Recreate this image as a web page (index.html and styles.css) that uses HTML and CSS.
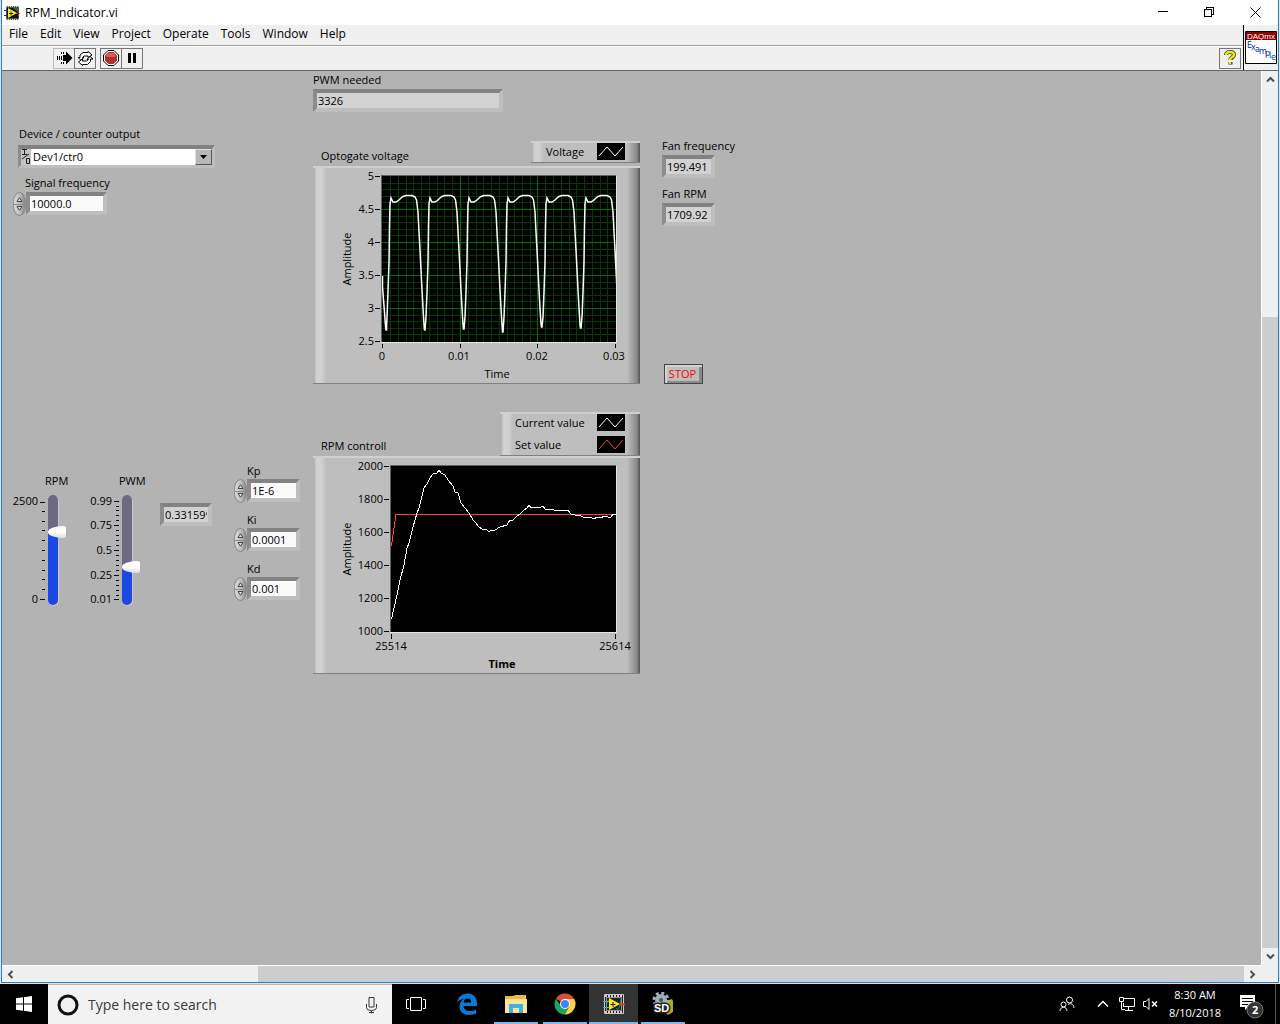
FILE: index.html
```html
<!DOCTYPE html>
<html lang="en">
<head>
<meta charset="utf-8">
<title>RPM_Indicator.vi</title>
<link rel="stylesheet" href="styles.css">
</head>
<body>
<svg class="sprites" aria-hidden="true">
  <defs>
    <symbol id="vi" viewBox="0 0 16 14">
      <path fill="#555" d="M2 0h13v14H2z"/>
      <path fill="#111" d="M3 2h11v10H3z"/>
      <path stroke="#ddd" stroke-dasharray="1 1" d="M2 .5h13M2 13.500h13"/>
      <path stroke="#1d1dc8" d="M0 4.500h5M0 9.500h5"/>
      <path stroke="#e02020" d="M12 7.500h4"/>
      <path fill="#1c7a1c" d="M9 2h5v4z"/>
      <path fill="#ffe81a" d="M4 2l9 5-9 5z"/>
      <path stroke="#222" d="M5 7.500h4M7 5.500v4"/>
    </symbol>
    <symbol id="up" viewBox="0 0 7 5"><path d="M1 4.500L3.500.800 6 4.500z" fill="#ddd" stroke="#444" stroke-width="1"/></symbol>
    <symbol id="down" viewBox="0 0 7 5"><path d="M1 .5L3.500 4.200 6 .5z" fill="#ddd" stroke="#444" stroke-width="1"/></symbol>
    <path id="cycle" d="M1 141L2 116 3 86 3.500 50 4 28 5 22 7 26h3l3-2 2-2 2-1.500L20 19.500h6L29 21l1.500 3L32 36l1 20 1 18 1 20 1 20 1 18"/>
    <clipPath id="plotClip"><path d="M0 0h234v166H0z"/></clipPath>
  </defs>
</svg>

<div class="window">
  <header class="titlebar">
    <svg class="app-icon" width="16" height="14"><use href="#vi"/></svg>
    <h1>RPM_Indicator.vi</h1>
    <button class="caption" aria-label="Minimize"><svg width="11" height="11"><path d="M0 4.500h10"/></svg></button>
    <button class="caption" aria-label="Restore"><svg width="11" height="11"><path d="M.5 2.500h7v7h-7zM2.500 2.500v-2h7v7h-2"/></svg></button>
    <button class="caption" aria-label="Close"><svg width="11" height="11"><path class="smooth" d="M.5.500l10 10M10.500.500l-10 10"/></svg></button>
  </header>

  <div class="bars">
    <div class="bars-main">
      <nav class="menu">
        <button>File</button><button>Edit</button><button>View</button><button>Project</button><button>Operate</button><button>Tools</button><button>Window</button><button>Help</button>
      </nav>
      <div class="toolbar">
        <button class="tool pale" aria-label="Running"><svg width="17" height="14"><path class="crisp" d="M1.500 5v4M3.500 5v4M5.500 5v4M5.500 1v2M7.500 1v2M5.500 11v2M7.500 11v2" stroke="#000" fill="none"/><path d="M7 4h3V.5l6.500 6.500-6.500 6.500V10H7z"/></svg></button>
        <button class="tool" aria-label="Run continuously"><svg width="17" height="15" fill="#fff" stroke="#000"><path d="M3 6.500V4L6 1.500h5V.500L15 4l-4 2.500V5H7L5.500 6.500H7L3.800 9 1 6.500z"/><path d="M13.500 8v2.500l-3 3h-5v1L1.500 11l4-3v2h4L11.500 8.500H10L13 5.500l3 2.500z"/></svg></button>
        <button class="tool stop-run" aria-label="Abort execution"><svg width="16" height="16"><path d="M5 .5h6L15.500 5v6L11 15.500H5L.5 11V5z" fill="#fff" stroke="#000"/><path d="M5.500 2h5L14 5.500v5L10.500 14h-5L2 10.500v-5z" fill="#b82c2c"/><path d="M5.500 3h5L13 5.500 12 7H4L3 5.500z" fill="#d46060"/></svg></button>
        <button class="tool" aria-label="Pause"><svg width="10" height="10"><path d="M1 0h3v10H1zM6 0h3v10H6z"/></svg></button>
        <button class="tool help" aria-label="Context help"><svg width="14" height="16"><path d="M3 5c0-4 8-4 8-.5 0 3-3.500 2.500-3.500 5.500M7.500 12v2.500" fill="none" stroke="#333" stroke-width="4"/><path d="M3 5c0-4 8-4 8-.5 0 3-4 2.500-4 5.500M7 12v2" fill="none" stroke="#f6ea00" stroke-width="2.500"/></svg></button>
      </div>
    </div>
    <div class="vi-icon">
      <svg width="32" height="33" role="img" aria-label="DAQmx Example">
        <path d="M.5.500h31v32H.5z" fill="#fff" stroke="#000"/><path d="M1 1h30v8H1z" fill="#900000"/>
        <text class="daq" x="2" y="8">DAQmx</text>
        <text class="example" x="2 6 10 14 20 24 26" y="17 19 21 23 25 27 29">Example</text>
      </svg>
    </div>
  </div>

  <div class="workspace">
    <main class="panel">
      <section class="col-inputs">
        <div class="device">
          <label for="device">Device / counter output</label>
          <div class="device-box">
            <svg width="10" height="16" aria-hidden="true"><path d="M1 .5h5M3.500.500v5M1 5.500h5M1 10l7-5M5.500 9.500h3v5h-3z" fill="none" stroke="#222"/></svg>
            <select id="device"><option>Dev1/ctr0</option></select>
            <span class="drop"><svg width="7" height="4"><path d="M0 0h7L3.500 4z"/></svg></span>
          </div>
        </div>
        <div class="numeric freq">
          <label for="freq">Signal frequency</label>
          <div class="spinbox">
            <span class="spin"><button aria-label="Increase"><svg width="7" height="5"><use href="#up"/></svg></button><button aria-label="Decrease"><svg width="7" height="5"><use href="#down"/></svg></button></span>
            <input id="freq" class="field" value="10000.0">
          </div>
        </div>

        <div class="tuning">
          <div class="slider">
            <label for="rpm">RPM</label>
            <div class="slider-row">
              <svg class="scale" width="34" height="110"><text x="26" y="10">2500</text><text x="26" y="108">0</text>
                <path d="M28 7.500h5M30 16.500h3M30 26.500h3M30 35.500h3M30 45.500h3M30 55.500h3M30 65.500h3M30 75.500h3M30 84.500h3M30 94.500h3M28 104.500h5"/></svg>
              <input id="rpm" type="range" min="0" max="2500" value="1710" style="--fill:68%">
            </div>
          </div>
          <div class="slider">
            <label for="pwm">PWM</label>
            <div class="slider-row">
              <svg class="scale" width="34" height="110"><text x="26" y="10">0.99</text><text x="26" y="34">0.75</text><text x="26" y="59">0.5</text><text x="26" y="84">0.25</text><text x="26" y="108">0.01</text>
                <path d="M28 6.500h5M28 30.500h5M28 55.500h5M28 80.500h5M28 104.500h5M30 11.500h3M30 15.500h3M30 20.500h3M30 25.500h3M30 35.500h3M30 40.500h3M30 45.500h3M30 50.500h3M30 60.500h3M30 65.500h3M30 70.500h3M30 75.500h3M30 85.500h3M30 90.500h3M30 95.500h3M30 100.500h3"/></svg>
              <input id="pwm" type="range" min="0.01" max="0.99" step="0.001" value="0.332" style="--fill:34%">
            </div>
          </div>
          <input class="field readout duty" aria-label="PWM value" value="0.331599" readonly>
          <div class="gains">
            <div class="numeric">
              <label for="kp">Kp</label>
              <div class="spinbox"><span class="spin"><button aria-label="Increase Kp"><svg width="7" height="5"><use href="#up"/></svg></button><button aria-label="Decrease Kp"><svg width="7" height="5"><use href="#down"/></svg></button></span><input id="kp" class="field" value="1E-6"></div>
            </div>
            <div class="numeric">
              <label for="ki">Ki</label>
              <div class="spinbox"><span class="spin"><button aria-label="Increase Ki"><svg width="7" height="5"><use href="#up"/></svg></button><button aria-label="Decrease Ki"><svg width="7" height="5"><use href="#down"/></svg></button></span><input id="ki" class="field" value="0.0001"></div>
            </div>
            <div class="numeric">
              <label for="kd">Kd</label>
              <div class="spinbox"><span class="spin"><button aria-label="Increase Kd"><svg width="7" height="5"><use href="#up"/></svg></button><button aria-label="Decrease Kd"><svg width="7" height="5"><use href="#down"/></svg></button></span><input id="kd" class="field" value="0.001"></div>
            </div>
          </div>
        </div>
      </section>

      <section class="col-charts">
        <div class="needed">
          <label for="needed">PWM needed</label>
          <input id="needed" class="field readout" value="3326" readonly>
        </div>

        <figure class="graph">
          <div class="graph-head">
            <figcaption>Optogate voltage</figcaption>
            <ul class="legend raised one">
              <li>Voltage <svg width="28" height="17"><path class="swatch" d="M2 13L10 4l8 9 8-9"/></svg></li>
            </ul>
          </div>
          <div class="raised plot">
            <svg width="327" height="215">
              <g class="ylab"><text x="61" y="12">5</text><text x="61" y="45">4.5</text><text x="61" y="78">4</text><text x="61" y="111">3.5</text><text x="61" y="144">3</text><text x="61" y="177">2.5</text></g>
              <path class="ticks" d="M62 8.500h5M62 41.500h5M62 74.500h5M62 107.500h5M62 140.500h5M62 173.500h5M69.500 176v4M147.500 176v4M224.500 176v4M302.500 176v4"/>
              <g class="xlab"><text x="69" y="192">0</text><text x="146" y="192">0.01</text><text x="224" y="192">0.02</text><text x="301" y="192">0.03</text><text x="184" y="210">Time</text></g>
              <text class="axis" transform="translate(38 91) rotate(-90)">Amplitude</text>
              <path class="bezel-dark" d="M68.500 174V7.500H303"/><path class="bezel-light" d="M68 174.500h235.500V8"/>
              <g transform="translate(69 8)">
                <path d="M0 0h234v166H0z"/>
                <path class="minor" d="M8.500 0v166M16.500 0v166M24.500 0v166M31.500 0v166M39.500 0v166M47.500 0v166M55.500 0v166M62.500 0v166M70.500 0v166M86.500 0v166M94.500 0v166M101.500 0v166M109.500 0v166M117.500 0v166M125.500 0v166M132.500 0v166M140.500 0v166M148.500 0v166M163.500 0v166M171.500 0v166M179.500 0v166M187.500 0v166M194.500 0v166M202.500 0v166M210.500 0v166M218.500 0v166M225.500 0v166M0 7.500h234M0 13.500h234M0 20.500h234M0 26.500h234M0 40.500h234M0 46.500h234M0 53.500h234M0 59.500h234M0 73.500h234M0 79.500h234M0 86.500h234M0 92.500h234M0 106.500h234M0 112.500h234M0 119.500h234M0 125.500h234M0 139.500h234M0 145.500h234M0 152.500h234M0 158.500h234"/>
                <path class="major" d="M78.500 0v166M155.500 0v166M0 33.500h234M0 66.500h234M0 99.500h234M0 132.500h234"/>
                <g class="trace bold" clip-path="url(#plotClip)">
                  <path d="M.5 100v11L2 130l1.500 20 .5 4h.5L5 141M41 132l1 17 .5 5h.5l1-13M80 132l1 17 .5 4h.5l1-12M119 132l1 17 .5 7h.5l1-15M158 132l1 16 .5 3h.5l1-10M197 132l1 17 .5 3h.5l1-11"/>
                  <use href="#cycle" x="4"/><use href="#cycle" x="43"/><use href="#cycle" x="82"/><use href="#cycle" x="121"/><use href="#cycle" x="160"/><use href="#cycle" x="199"/>
                </g>
              </g>
            </svg>
          </div>
        </figure>

        <figure class="graph second">
          <div class="graph-head">
            <figcaption>RPM controll</figcaption>
            <ul class="legend raised two">
              <li>Current value <svg width="28" height="17"><path class="swatch" d="M2 13L10 4l8 9 8-9"/></svg></li>
              <li>Set value <svg width="28" height="17"><path class="swatch red" d="M2 13L10 4l8 9 8-9"/></svg></li>
            </ul>
          </div>
          <div class="raised plot">
            <svg width="327" height="215">
              <g class="ylab"><text x="70" y="12">2000</text><text x="70" y="45">1800</text><text x="70" y="78">1600</text><text x="70" y="111">1400</text><text x="70" y="144">1200</text><text x="70" y="177">1000</text></g>
              <path class="ticks" d="M71 8.500h5M71 41.500h5M71 74.500h5M71 107.500h5M71 140.500h5M71 173.500h5M78.500 176v5M302.500 176v5"/>
              <g class="xlab"><text x="78" y="192">25514</text><text x="302" y="192">25614</text><text class="strong" x="189" y="210">Time</text></g>
              <text class="axis" transform="translate(38 91) rotate(-90)">Amplitude</text>
              <path class="bezel-dark" d="M77.500 174V7.500H303"/><path class="bezel-light" d="M77 174.500h226.500V8"/>
              <g transform="translate(78 8)">
                <path d="M0 0h225v166H0z"/>
                <path class="trace red" d="M.5 80L5 48.500h220"/>
                <path class="trace" d="M.5 153L6 129 9 114 13 99 16 82 18 77 22 61 26 47 28 42 30 34 33 22 36 18 39 12 42 8 46 7 48 4 50 7 54 9 57 14 62 20 64 26 67 27 70 37 74 42 78 47 82 54 85 57 88 61 91 63 95 63 98 66 100 64 104 64 109 61 116 59 119 54 122 54 126 50 129 48 133 44 136 42 138 39 140 42 144 41 148 42 152 40 154 43 160 43 166 45 172 44 175 45 177 44 180 48 183 48 185 50 188 49 192 51 199 51 203 53 206 51 210 52 213 50 216 50 218 52 220 51 222 48 225 48"/>
              </g>
            </svg>
          </div>
        </figure>
      </section>

      <section class="col-readouts">
        <div class="reading"><label for="fanf">Fan frequency</label><input id="fanf" class="field readout" value="199.491" readonly></div>
        <div class="reading"><label for="fanr">Fan RPM</label><input id="fanr" class="field readout" value="1709.92" readonly></div>
        <button class="stop">STOP</button>
      </section>
    </main>

    <div class="vscroll">
      <button aria-label="Scroll up"><svg width="9" height="7"><path d="M1 5.500L4.500 2 8 5.500"/></svg></button>
      <div class="v-track"><div class="v-thumb"></div></div>
      <button aria-label="Scroll down"><svg width="9" height="7"><path d="M1 1.500L4.500 5 8 1.500"/></svg></button>
    </div>
    <div class="hscroll">
      <button aria-label="Scroll left"><svg width="7" height="9"><path d="M5.500 1L2 4.500 5.500 8"/></svg></button>
      <div class="h-track"><div class="h-thumb"></div></div>
      <button aria-label="Scroll right"><svg width="7" height="9"><path d="M1.500 1L5 4.500 1.500 8"/></svg></button>
    </div>
    <div class="corner"></div>
  </div>
</div>

<footer class="taskbar">
  <button class="start" aria-label="Start"><svg width="16" height="16" fill="#fff"><path d="M0 2.300l7-1V7.500H0zM8 1.200L16 0v7.500H8zM0 8.500h7v6.200l-7-1zM8 8.500h8V16l-8-1.200z"/></svg></button>
  <div class="search">
    <svg width="22" height="22"><circle cx="11" cy="11" r="9" fill="none" stroke="#111" stroke-width="3"/></svg>
    <input aria-label="Search" placeholder="Type here to search">
    <svg width="13" height="18" fill="none" stroke="#333"><path d="M4 1.500h5v9.500H4zM1.500 8v3.500c0 4 10 4 10 0V8M6.500 14.500v3M4 16.500h5"/></svg>
  </div>
  <button class="taskview" aria-label="Task view"><svg width="20" height="14" fill="none" stroke="#fff"><path d="M4.500.500h11v13h-11zM3 2.500H.5v9H3M17 2.500h2.500v9H17"/></svg></button>
  <button class="task" aria-label="Edge"><svg width="22" height="22"><path fill="#0c78d8" d="M1 10C2 4 6 .5 11.500.5c6 0 9.500 4 9.500 10V13H7.500c.2 3.500 3 5 6.500 5 2.500 0 4.500-.6 6-1.600v4.200c-2 1-4.500 1.400-7 1.400-6 0-9.500-3.600-9.500-8.500 0-3.500 2-6.500 5-8C5 6.200 2.500 7.500 1 10zm6.600-.500h7.600c0-2.500-1.200-4-3.500-4-2.400 0-3.800 1.600-4.100 4z"/></svg></button>
  <button class="task open" aria-label="File Explorer"><svg width="22" height="20"><path fill="#e8b94a" d="M0 2h8l2-1h11v18H0z"/><path fill="#fce395" d="M0 5h22v14H0z"/><path fill="#3fb0e8" d="M4 10h14v9h-4v-5H8v5H4z"/></svg></button>
  <button class="task open" aria-label="Chrome"><svg width="22" height="22"><path fill="#de4c3f" d="M11 11L1.900 5.700A10.500 10.500 0 0 1 20.100 5.800z"/><path fill="#fdd04a" d="M11 6h9.200A10.500 10.500 0 0 1 10.500 21.500L15.300 13.500z"/><path fill="#1da462" d="M1.900 5.700A10.500 10.500 0 0 0 10.500 21.500L15.300 13.500 7 13z"/><circle cx="11" cy="11" r="5" fill="#fff"/><circle cx="11" cy="11" r="4" fill="#4285f4"/></svg></button>
  <button class="task open active" aria-label="LabVIEW"><svg width="22" height="20"><path fill="#222" stroke="#ccc" d="M1.500.500h19v19h-19z"/><path fill="none" stroke="#ccc" stroke-width="2" stroke-dasharray="2 1" d="M2 2h18M2 18h18"/><path fill="#222" stroke="#999" d="M3.500 3.500h15v13h-15z"/><path fill="none" stroke="#2a9a6a" d="M4 9c3-8 4 2 5 5M13 14c2 3 4 0 5-9"/><path d="M0 7.500h6M0 13.500h6" stroke="#3bc"/><path d="M17 10.500h5" stroke="#e33" stroke-width="2"/><path fill="#ffe81a" d="M6 4l11 6-11 6z"/><path stroke="#222" d="M7.500 10.500h5M10 8v5"/></svg></button>
  <button class="task open" aria-label="SD tool"><svg width="24" height="24"><path fill="#b4a71c" d="M15 9l6-2 1 2v11l-5 3-2-2z"/><circle cx="10" cy="8" r="6" fill="#9bb2bd"/><circle cx="10" cy="8" r="7" fill="none" stroke="#9bb2bd" stroke-width="3" stroke-dasharray="3 2.500"/><circle cx="10" cy="8" r="2" fill="#47545c"/><text class="sd" x="3" y="20">SD</text></svg></button>
  <div class="tray">
    <svg class="people" width="16" height="16" fill="none" stroke="#fff"><circle cx="10.500" cy="4" r="3"/><circle cx="4.500" cy="8.500" r="2.500"/><path d="M1 15c0-5 7-5 7 0M9 8.500c3-2 6 0 6 3.500"/></svg>
    <svg class="chev" width="12" height="8" fill="none" stroke="#fff" stroke-width="1.500"><path d="M1 6.500l5-5 5 5"/></svg>
    <svg class="net" width="17" height="14" fill="none" stroke="#fff"><path d="M4 1.500h11.500v8H4.500V6M.5.500h4v4h-4zM2.500 5v7.500H6M9.500 10v3M6 13.500h8"/></svg>
    <svg class="vol" width="15" height="14" fill="none" stroke="#fff"><path d="M.5 4.500H3l3-3v11l-3-3H.5z"/><path stroke-width="1.500" d="M9 4.500l5 5M14 4.500l-5 5"/></svg>
    <time class="clock"><span>8:30 AM</span><span>8/10/2018</span></time>
    <svg class="notes" width="25" height="30"><path fill="#fff" d="M1 6h15v12H9l-3 3v-3H1z"/><path d="M3 9.500h11M3 12.500h11M3 15.500h6" stroke="#000"/><circle cx="16" cy="21" r="8" fill="#333" stroke="#777"/><text class="count" x="13" y="25">2</text></svg>
    <span class="desktop"></span>
  </div>
</footer>
</body>
</html>
```
FILE: styles.css
```css
* { box-sizing: border-box; }

body {
  margin: 0;
  height: 100vh;
  display: flex;
  flex-direction: column;
  overflow: hidden;
  background: #e4e4e4;
  color: #000;
  font: 11px/16px "Open Sans", "Noto Sans", sans-serif;
}

button, input, select { font: inherit; color: inherit; padding: 0; border: 0; margin: 0; background: none; border-radius: 0; }
button { display: flex; align-items: center; justify-content: center; }
input, select { outline: none; min-width: 0; }
label { display: block; white-space: nowrap; }
svg { display: block; flex: none; }
.sprites { width: 0; height: 0; position: absolute; }
.crisp { shape-rendering: crispEdges; }

/* window frame */
.window {
  flex: 1;
  min-height: 0;
  display: flex;
  flex-direction: column;
  margin: 0 1px 1px;
  border: solid #1883d7;
  border-width: 0 1px 1px;
  background: #f0f0f0;
}
.titlebar { display: flex; align-items: center; height: 25px; background: #fff; padding-left: 2px; }
.app-icon { margin-right: 5px; }
.titlebar h1 { flex: 1; margin: 0; font-size: 12px; font-weight: 400; }
.caption { width: 46px; height: 25px; }
.caption path { fill: none; stroke: #000; shape-rendering: crispEdges; }
.caption path.smooth { shape-rendering: auto; }

.bars { display: flex; height: 46px; border-bottom: 1px solid #666; }
.bars-main { flex: 1; }
.menu { display: flex; gap: 12px; height: 21px; padding: 0 7px 2px; border-bottom: 1px solid #a0a0a0; font-size: 12px; }
.toolbar { display: flex; align-items: center; height: 24px; padding: 0 2px 1px 51px; border-top: 1px solid #fff; }
.tool { width: 22px; height: 21px; border: 1px solid #777; margin-left: -1px; }
.tool.pale { border-color: #bbb; margin-left: 0; }
.tool.stop-run { margin-left: 4px; }
.tool.help { margin-left: auto; }
.vi-icon { width: 35px; border-left: 1px solid #000; padding: 6px 1px; }
.daq { font: 8px "Liberation Sans", sans-serif; fill: #fff; }
.example { font: 8px "DejaVu Sans", sans-serif; fill: #0030c0; }

.workspace { flex: 1; min-height: 0; display: grid; grid-template-columns: minmax(0, 1fr) 17px; grid-template-rows: minmax(0, 1fr) 17px; }

/* front panel */
.panel { display: flex; background: #b3b3b3; overflow: hidden; }
.col-inputs { width: 311px; flex: none; padding-top: 55px; }
.col-charts { width: 327px; flex: none; padding-top: 1px; }
.col-readouts { padding: 67px 0 0 22px; }

.field {
  display: block;
  height: 23px;
  padding: 0 1px;
  border: 4px solid;
  border-color: #828282 #bebebe #bebebe #8c8c8c;
  background: #fafafa;
}
.readout { background: #d2d2d2; }

.device { margin: 0 0 7px 16px; }
.device label { margin: 0 0 3px 1px; }
.device-box {
  display: flex;
  width: 197px;
  height: 23px;
  border: solid;
  border-width: 4px 3px 3px;
  border-color: #828282 #bebebe #bebebe #8c8c8c;
  background: #c4c4c4;
}
.device-box select { flex: 1; appearance: none; background: #fff; padding-left: 2px; }
.drop { display: flex; align-items: center; justify-content: center; width: 17px; border: 1px solid; border-color: #e0e0e0 #555 #555 #e0e0e0; background: #b8b8b8; }

.numeric label { margin-left: 13px; }
.spinbox { display: flex; }
.spin { width: 13px; height: 24px; margin-bottom: -1px; display: flex; flex-direction: column; }
.spin button { flex: 1; background: linear-gradient(to right, #dcdcdc, #b8b8b8 60%, #858585); border: solid #8c8c8c; border-width: 1px 1px 0; border-radius: 7px 7px 0 0 / 11px 11px 0 0; padding-top: 2px; }
.spin button + button { border-radius: 0 0 7px 7px / 0 0 11px 11px; border-width: 1px; padding: 0 0 2px; }
.spinbox .field { width: 53px; }
.freq { margin-left: 11px; }
.freq label { margin-left: 12px; }
.freq .spinbox { margin-top: 1px; }
.freq .spinbox .field { width: 81px; }

.tuning { display: flex; align-items: flex-start; margin-top: 248px; padding-left: 10px; }
.slider { width: 74px; padding-top: 10px; }
.slider label { margin-left: 33px; }
.slider-row { display: flex; margin-top: 6px; gap: 2px; }
.scale { overflow: visible; }
.scale text { text-anchor: end; }
.scale path { stroke: #000; fill: none; shape-rendering: crispEdges; }
input[type="range"] { appearance: none; writing-mode: vertical-lr; direction: rtl; width: 10px; height: 110px; }
input[type="range"]::-webkit-slider-runnable-track {
  width: 10px;
  height: 110px;
  border-radius: 5px;
  background: linear-gradient(to top, #1a48e0 var(--fill), #6c6a82 var(--fill));
  box-shadow: 1px 1px 0 #c8c8c8;
}
input[type="range"]::-webkit-slider-thumb {
  appearance: none;
  width: 18px;
  height: 12px;
  border-radius: 16px 3px 3px 16px / 6px 2px 2px 6px;
  background: linear-gradient(#fff 50%, #ddd);
}
.duty { width: 52px; margin: 40px 22px 0 0; }
.gains { display: grid; gap: 10px; }

.needed { margin-bottom: 29px; }
.needed label { margin-bottom: 1px; }
.needed .field { width: 190px; }

/* graphs */
.graph { margin: 0; }
.graph.second { margin-top: 28px; }
.graph-head { display: flex; align-items: flex-end; justify-content: space-between; }
.graph-head figcaption { padding: 0 0 2px 8px; }
.raised {
  border: solid;
  border-width: 2px 0 1px;
  border-color: #d0d0d0 #666 #808080;
  background: linear-gradient(to right, #aaa, #d4d4d4 4px, #d0d0d0 9px, #bebebe 13px, #bebebe calc(100% - 13px), #888 calc(100% - 3px), #505050);
}
.legend { list-style: none; margin: 0; padding: 0 15px; display: grid; gap: 5px; align-content: start; }
.legend li { display: flex; align-items: center; justify-content: space-between; height: 17px; }
.legend.one { width: 109px; margin-bottom: 3px; height: 22px; }
.legend.two { width: 140px; height: 44px; }
.legend svg { background: #000; }
.swatch { fill: none; stroke: #fff; }
.swatch.red { stroke: #ff4040; }
.ylab text { text-anchor: end; }
.xlab text, .axis { text-anchor: middle; }
.xlab .strong { font-weight: 700; }
.ticks { stroke: #000; shape-rendering: crispEdges; }
.bezel-dark, .bezel-light { fill: none; stroke: #606060; shape-rendering: crispEdges; }
.bezel-light { stroke: #e6e6e6; }
.minor { stroke: #003c00; shape-rendering: crispEdges; }
.major { stroke: #007000; shape-rendering: crispEdges; }
.trace { fill: none; stroke: #fff; shape-rendering: crispEdges; }
.trace.bold { stroke-width: 1.500; shape-rendering: auto; }
.trace.red { stroke: #ff4040; }

.reading { margin-bottom: 8px; }
.reading label { margin-bottom: 1px; }
.reading .field { width: 53px; }
.stop { width: 39px; height: 20px; margin: 138px 0 0 2px; padding-right: 2px; border: 1px solid #444; box-shadow: inset 2px 2px 0 #d4d4d4, inset -3px -2px 1px #888; background: #bebebe; color: #f00; }

/* scroll bars */
.vscroll { display: flex; flex-direction: column; border-left: 1px solid #fff; }
.vscroll button { height: 17px; flex: none; }
.hscroll button { width: 17px; flex: none; }
.vscroll path, .hscroll path { fill: none; stroke: #505050; stroke-width: 2; }
.v-track { flex: 1; display: flex; align-items: flex-end; }
.v-thumb { width: 100%; height: 73.400%; background: #cdcdcd; }
.hscroll { display: flex; border-top: 1px solid #fff; }
.h-track { flex: 1; display: flex; justify-content: flex-end; }
.h-thumb { width: 80.500%; background: #cdcdcd; }

/* taskbar */
.taskbar { display: flex; height: 40px; background: #000; color: #fff; }
.start, .taskview { width: 48px; }
.taskview { margin-right: 2px; }
.search { width: 344px; display: flex; align-items: center; gap: 9px; padding: 0 14px 0 9px; background: #f2f2f2; border-top: 1px solid #b8b8b8; }
.search input { flex: 1; font-size: 14px; line-height: 20px; }
.search input::placeholder { color: #3a3a3a; opacity: 1; }
.task { width: 49px; border: solid transparent; border-width: 2px 0; background-clip: padding-box; }
.task.open { border-image: linear-gradient(to right, transparent 5px, #76b9ed 5px, #76b9ed 45px, transparent 45px) 2; border-top-width: 0; padding-top: 2px; }
.task.active { background: #333; border-image: linear-gradient(#76b9ed, #76b9ed) 2; }
.sd { font: 700 11px "Liberation Sans", sans-serif; fill: #fff; stroke: #222; stroke-width: 3px; paint-order: stroke; }
.tray { margin-left: auto; display: flex; align-items: center; height: 40px; }
.people { margin-right: 22px; }
.chev { margin-right: 10px; }
.net { margin-right: 7px; }
.clock { display: flex; flex-direction: column; align-items: center; line-height: 18px; width: 60px; margin: 0 14px 0 7px; }
.notes { margin-right: 11px; }
.count { font: 700 11px "Open Sans", sans-serif; fill: #fff; }
.desktop { width: 5px; height: 40px; border-left: 1px solid #555; }
```
